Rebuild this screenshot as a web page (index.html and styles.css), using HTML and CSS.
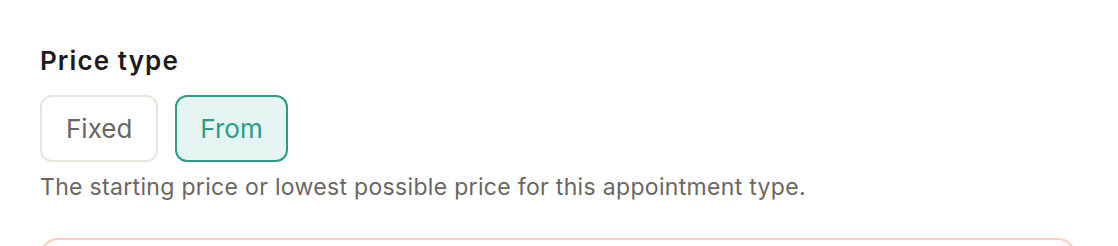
FILE: index.html
```html
<!DOCTYPE html>
<html>
<head>
<meta charset="utf-8">
<link rel="stylesheet" href="styles.css">
</head>
<body>
<div class="page">
  <div class="field">
    <h2 class="label">Price type</h2>
    <div class="options">
      <button class="opt">Fixed</button>
      <button class="opt active">From</button>
    </div>
    <p class="hint">The starting price or lowest possible price for this appointment type.</p>
  </div>
  <div class="next-box"></div>
</div>
</body>
</html>
```

FILE: styles.css
```css
html, body {
  margin: 0;
  padding: 0;
  background: #ffffff;
}
body {
  font-family: Inter, "Liberation Sans", sans-serif;
  width: 1118px;
  height: 246px;
  overflow: hidden;
}
.page {
  padding: 45px 42px 0 40px;
}
.label {
  margin: 0;
  font-size: 26px;
  font-weight: 600;
  color: #1c1b1a;
  line-height: 32px;
  letter-spacing: 1.1px;
}
.options {
  display: flex;
  gap: 17px;
  margin-top: 18px;
}
.opt {
  box-sizing: border-box;
  height: 67px;
  padding: 0 24px;
  border: 2px solid #e9e5dc;
  border-radius: 12px;
  background: #ffffff;
  color: #6b6661;
  font-family: inherit;
  font-size: 26px;
  font-weight: 400;
}
.opt.active {
  padding: 0 23px;
  border-color: #2b9c8a;
  background: #e6f4f2;
  color: #2b9c8a;
}
.hint {
  margin: 11px 0 0;
  font-size: 23px;
  line-height: 28px;
  letter-spacing: 0.32px;
  color: #6b6661;
}
.next-box {
  margin-top: 37px;
  height: 40px;
  border: 2px solid #fccdc2;
  border-radius: 18px;
}
```
